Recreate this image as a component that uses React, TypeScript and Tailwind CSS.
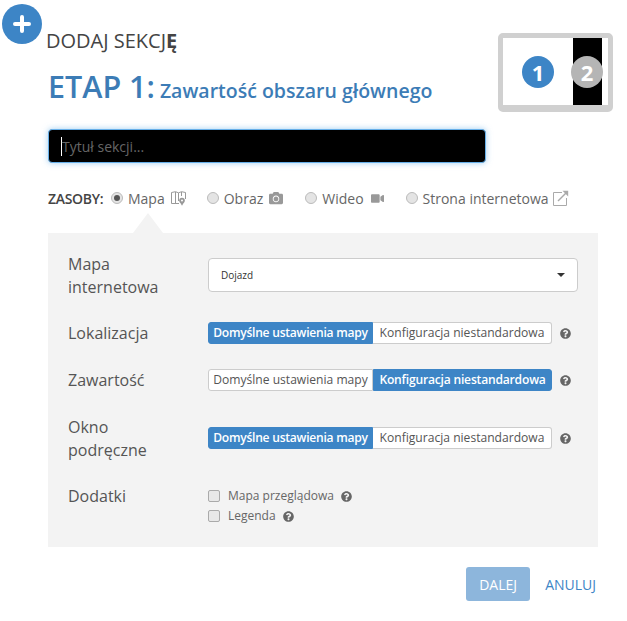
import React from "react";
import { FaCamera, FaVideo, FaQuestionCircle } from "react-icons/fa";

const Help = ({ className }: { className: string }) => <FaQuestionCircle size={11} className={className} color="#666" />;

const Seg = ({ active }: { active: 0 | 1 }) => (
  <div className="flex h-[22px] items-center">
    <div className="flex h-[22px] whitespace-nowrap text-[12.100px] leading-[20px]">
      <span className={active === 0 ? "w-[165px] rounded-l-[3px] border border-[#3d85c6] bg-[#3d85c6] text-center font-semibold tracking-[-0.25px] text-white" : "w-[165px] rounded-l-[3px] border border-[#ccc] bg-white text-center text-[#555]"}>Domyślne ustawienia mapy</span>
      <span className={active === 1 ? "w-[179px] rounded-r-[3px] border border-[#3d85c6] bg-[#3d85c6] text-center font-semibold tracking-[-0.2px] text-white" : "w-[179px] rounded-r-[3px] border border-l-0 border-[#ccc] bg-white text-center text-[#555]"}>Konfiguracja niestandardowa</span>
    </div>
    <Help className="ml-[8px]" />
  </div>
);

const Radio = ({ on, label, icon, iconGap }: { on?: boolean; label: string; icon: React.ReactNode; iconGap: string }) => (
  <span className="flex items-center">
    <span className="flex h-[12px] w-[12px] items-center justify-center rounded-full border border-[#bbb] bg-[#e4e4e4]">
      {on && <span className="h-[6px] w-[6px] rounded-full bg-[#555]" />}
    </span>
    <span className="ml-[5px] text-[14px] text-[#666]">{label}</span>
    <span className={iconGap}>{icon}</span>
  </span>
);

export default function App() {
  return (
    <div className="relative h-[621px] w-[627px] overflow-hidden bg-white text-[#444]" style={{ fontFamily: '"Open Sans", sans-serif' }}>
      <div className="absolute left-[2px] top-[4px] flex h-[40px] w-[40px] items-center justify-center rounded-full bg-[#3d85c6]">
        <svg width="18" height="18" viewBox="0 0 18 18"><path d="M9 2v14M2 9h14" stroke="#fff" strokeWidth="4" strokeLinecap="round" /></svg>
      </div>
      <div className="absolute left-[498px] top-[33px] h-[79px] w-[115px] rounded-[5px] border-x-[5px] border-t-[5px] border-b-[7px] border-[#d0d0d0] bg-white">
        <div className="absolute left-[70px] top-0 h-full w-[29px] bg-black" />
        <div className="absolute left-[19px] top-[18px] flex h-[32px] w-[32px] items-center justify-center rounded-full bg-[#3d85c6] text-[22px] font-bold text-white">1</div>
        <div className="absolute left-[68px] top-[18px] flex h-[32px] w-[32px] items-center justify-center rounded-full bg-[#b5b5b5] text-[22px] font-bold text-white">2</div>
      </div>

      <div className="flex flex-col pl-[48px] pr-[29px] pt-[27px]">
        <div className="-ml-[2px] text-[20px] font-medium leading-[28px] text-[#444]">DODAJ SEKCJ<span className="font-bold">Ę</span></div>
        <div className="mt-[12px] flex h-[40px] items-baseline gap-[5px] text-[#3c7cb6]">
          <span className="text-[30.500px] font-semibold leading-[38px]">ETAP 1:</span>
          <span className="text-[19.500px] font-semibold leading-[38px]">Zawartość obszaru głównego</span>
        </div>
        <div className="mt-[22px] flex h-[34px] w-[438px] items-center rounded-[4px] border border-[#66afe9] bg-black pl-[12px] text-[14px] text-[#666] shadow-[0_0_6px_rgba(102,175,233,0.6)]">
          <span className="h-[19px] w-[1px] bg-white" />Tytuł sekcji...
        </div>

        <div className="mt-[25px] flex h-[20px] items-center">
          <span className="mr-[9px] w-[56px] whitespace-nowrap text-[14px] font-semibold tracking-[-0.3px] text-[#444]">ZASOBY:</span>
          <div className="-ml-[2px] flex items-center">
            <Radio on label="Mapa" iconGap="ml-[6px] mr-[21px] flex" icon={
              <svg width="15" height="15" viewBox="0 0 15 15" fill="none" stroke="#999" strokeWidth="1"><path d="M8 12.500H.5V1.500L4.500 .7 7.500 1.800 10.500 .7 14.500 1.500V8" /><path d="M4.500 1v11M7.500 2v8M10.500 1v4" /><circle cx="11" cy="9.500" r="2.800" fill="#999" stroke="none" /><path d="M8.800 11L11 14.800 13.200 11z" fill="#999" stroke="none" /><circle cx="11" cy="9.500" r="1" fill="#fff" stroke="none" /></svg>
            } />
            <Radio label="Obraz" iconGap="ml-[6px] mr-[22px] flex" icon={<FaCamera size={14} color="#999" />} />
            <Radio label="Wideo" iconGap="ml-[7px] mr-[22px] flex" icon={<FaVideo size={13} color="#999" />} />
            <Radio label="Strona internetowa" iconGap="ml-[4px] flex" icon={
              <svg width="16" height="16" viewBox="0 0 16 16" fill="none" stroke="#aaa" strokeWidth="1"><path d="M9 2.500H.5v13h13V8" /><path d="M5 11l8-8" strokeWidth="1.500" /><path d="M9.500 .8h5.700v5.700z" fill="#aaa" stroke="none" /></svg>
            } />
          </div>
        </div>

        <div className="relative mt-[25px] flex h-[314px] w-[550px] flex-col bg-[#f3f3f3] px-[20px] pt-[19px]">
          <div className="absolute left-[85px] top-[-20px] h-0 w-0 border-x-[15px] border-b-[20px] border-x-transparent border-b-[#f3f3f3]" />
          <div className="flex h-[46px] items-center">
            <div className="w-[140px] pr-[30px] pt-[1px] text-[16px] leading-[23px] text-[#555]">Mapa internetowa</div>
            <div className="flex h-[34px] w-[370px] items-center justify-between rounded-[4px] border border-[#ccc] bg-white pl-[12px] pr-[12px] text-[10px] text-[#333]">
              Dojazd
              <span className="h-0 w-0 border-x-[4px] border-t-[4px] border-x-transparent border-t-[#333]" />
            </div>
          </div>
          <div className="mt-[24px] flex h-[22px] items-center">
            <div className="w-[140px] text-[16px] leading-[22px] text-[#555]">Lokalizacja</div>
            <Seg active={0} />
          </div>
          <div className="mt-[25px] flex h-[22px] items-center">
            <div className="w-[140px] text-[16px] leading-[22px] text-[#555]">Zawartość</div>
            <Seg active={1} />
          </div>
          <div className="mt-[24px] flex h-[46px] items-center">
            <div className="w-[140px] pr-[30px] pt-[1px] text-[16px] leading-[23px] text-[#555]">Okno podręczne</div>
            <Seg active={0} />
          </div>
          <div className="mt-[24px] flex items-start">
            <div className="w-[140px] text-[16px] leading-[22px] text-[#555]">Dodatki</div>
            <div className="flex flex-col pt-[1px] text-[12px] text-[#666]">
              <div className="flex h-[20px] items-center"><span className="mr-[8px] h-[12px] w-[12px] rounded-[2px] border border-[#aaa] bg-[#e8e8e8]" />Mapa przeglądowa<Help className="ml-[7px]" /></div>
              <div className="flex h-[20px] items-center"><span className="mr-[8px] h-[12px] w-[12px] rounded-[2px] border border-[#aaa] bg-[#e8e8e8]" />Legenda<Help className="ml-[7px]" /></div>
            </div>
          </div>
        </div>

        <div className="mt-[20px] flex items-center justify-end gap-[15px] pr-[2px]">
          <div className="flex h-[34px] w-[64px] items-center justify-center rounded-[3px] bg-[#8db6dc] text-[14px] text-white">DALEJ</div>
          <div className="text-[14px] text-[#3d85c6]">ANULUJ</div>
        </div>
      </div>
    </div>
  );
}
